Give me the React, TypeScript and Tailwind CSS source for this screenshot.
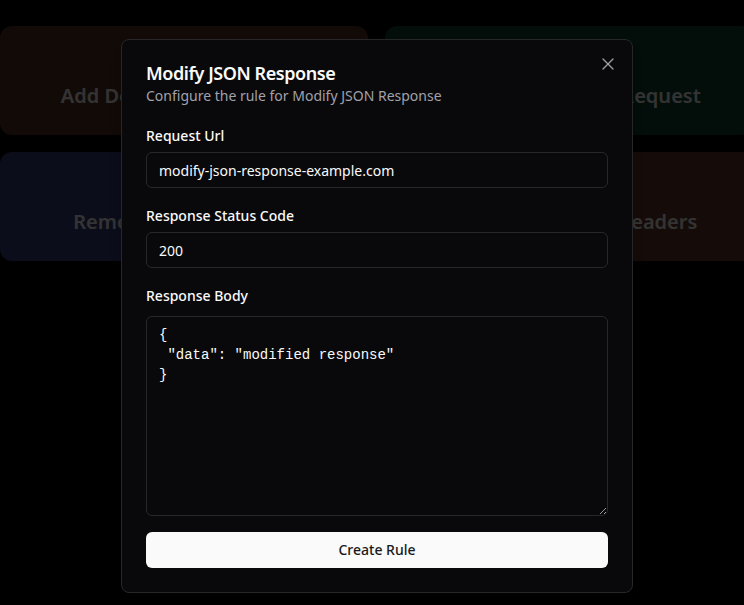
import * as React from "react";
import { X } from "lucide-react";

const cards = [
  { title: "Add Delay to the Request", bg: "bg-[#5c3424]" },
  { title: "Modify Headers of Request", bg: "bg-[#104733]" },
  { title: "Remove Query Params", bg: "bg-[#384286]" },
  { title: "Remove response headers", bg: "bg-[#6b3829]" },
];

function Field({
  label,
  gap = "gap-[6px]",
  children,
}: {
  label: string;
  gap?: string;
  children: React.ReactNode;
}) {
  return (
    <div className={`flex flex-col ${gap}`}>
      <label className="text-sm font-medium leading-5 text-[#fafafa]">{label}</label>
      {children}
    </div>
  );
}

export default function App() {
  const [url, setUrl] = React.useState("modify-json-response-example.com");
  const [status, setStatus] = React.useState("200");
  const [body, setBody] = React.useState('{\n "data": "modified response"\n}');

  return (
    <div
      className="relative h-[605px] w-[744px] overflow-hidden bg-black"
      style={{ fontFamily: '"Noto Sans", "Open Sans", sans-serif' }}
    >
      {/* page behind the dialog */}
      <div className="grid w-[753px] grid-cols-2 gap-[17px] pt-[26px]">
        {cards.map((c) => (
          <div
            key={c.title}
            className={`flex h-[109px] items-start justify-center rounded-xl pt-[56px] ${c.bg}`}
          >
            <span className="whitespace-nowrap text-xl font-semibold leading-7 text-white">{c.title}</span>
          </div>
        ))}
      </div>

      {/* overlay */}
      <div className="absolute inset-0 bg-black/80" />

      {/* dialog */}
      <div className="absolute left-[121px] top-[39px] w-[512px] rounded-lg border border-[#27272a] bg-[#09090b] p-6 shadow-lg">
        <button className="absolute right-3.5 top-3.5 text-[#a1a1aa]">
          <X size={20} strokeWidth={1.5} />
        </button>

        <div className="flex flex-col gap-1">
          <h2 className="text-lg font-semibold leading-none tracking-tight text-[#fafafa]">
            Modify JSON Response
          </h2>
          <p className="text-sm leading-5 text-[#a1a1aa]">Configure the rule for Modify JSON Response</p>
        </div>

        <div className="mt-5 flex flex-col gap-[18px]">
          <Field label="Request Url">
            <input
              value={url}
              onChange={(e) => setUrl(e.target.value)}
              className="h-9 w-full rounded-md border border-[#27272a] bg-transparent px-3 text-sm text-[#fafafa] outline-none"
            />
          </Field>
          <Field label="Response Status Code">
            <input
              value={status}
              onChange={(e) => setStatus(e.target.value)}
              className="h-9 w-full rounded-md border border-[#27272a] bg-transparent px-3 text-sm text-[#fafafa] outline-none"
            />
          </Field>
          <Field label="Response Body" gap="gap-2.5">
            <textarea
              value={body}
              onChange={(e) => setBody(e.target.value)}
              className="h-[200px] w-full rounded-md border border-[#27272a] bg-transparent px-3 py-2 text-sm leading-5 text-[#fafafa] outline-none"
              style={{ fontFamily: '"Liberation Mono", monospace' }}
            />
          </Field>
        </div>

        <button className="mt-4 h-9 w-full rounded-md bg-[#fafafa] text-sm font-medium text-[#18181b]">
          Create Rule
        </button>
      </div>
    </div>
  );
}
